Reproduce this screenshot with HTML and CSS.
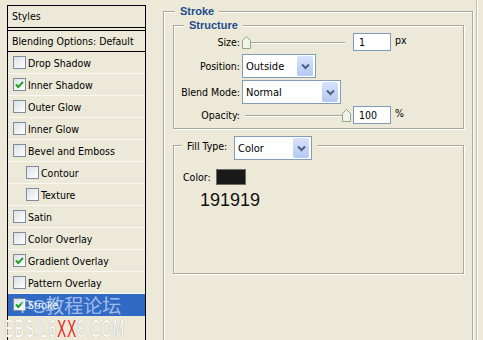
FILE: index.html
```html
<!DOCTYPE html>
<html lang="en">

<head>
  <meta charset="UTF-8" />
  <meta name="viewport" content="width=device-width, initial-scale=1.0" />
  <title>Layer Style - Stroke</title>
  <link rel="stylesheet" href="styles.css">
</head>

<body>

  <!-- Styles list on the left -->
  <div class="styles-panel">
    <div class="styles-head">Styles</div>
    <div class="blend-row">Blending Options: Default</div>
    <ul class="style-list">
      <li class="style-item"><span class="check"></span>Drop Shadow</li>
      <li class="style-item"><span class="check"><svg viewBox="0 0 11 11"><path d="M2 5.5 L4.3 8 L9 2.8" /></svg></span>Inner Shadow</li>
      <li class="style-item"><span class="check"></span>Outer Glow</li>
      <li class="style-item"><span class="check"></span>Inner Glow</li>
      <li class="style-item"><span class="check"></span>Bevel and Emboss</li>
      <li class="style-item sub"><span class="check"></span>Contour</li>
      <li class="style-item sub"><span class="check"></span>Texture</li>
      <li class="style-item"><span class="check"></span>Satin</li>
      <li class="style-item"><span class="check"></span>Color Overlay</li>
      <li class="style-item"><span class="check"><svg viewBox="0 0 11 11"><path d="M2 5.5 L4.3 8 L9 2.8" /></svg></span>Gradient Overlay</li>
      <li class="style-item"><span class="check"></span>Pattern Overlay</li>
      <li class="style-item selected"><span class="check"><svg viewBox="0 0 11 11"><path d="M2 5.5 L4.3 8 L9 2.8" /></svg></span>Stroke</li>
      <li class="style-item empty"></li>
    </ul>
  </div>

  <!-- Stroke settings -->
  <div class="settings">
    <div class="group stroke-group">
      <div class="group-title">Stroke</div>

      <div class="group structure-group">
        <div class="group-title">Structure</div>

        <div class="row row-size">
          <span class="label">Size:</span>
          <div class="slider">
            <span class="track"></span>
            <svg class="thumb" style="left: 0px" viewBox="0 0 9 13"><path d="M0.5 4.5 L4.5 0.5 L8.5 4.5 L8.5 12.5 L0.5 12.5 Z" /></svg>
          </div>
          <span class="num">1</span>
          <span class="unit">px</span>
        </div>

        <div class="row row-pos">
          <span class="label">Position:</span>
          <div class="select select-pos">
            <span class="value">Outside</span>
            <span class="select-btn"><svg viewBox="0 0 9 7"><path d="M1 1.5 L4.5 5 L8 1.5" /></svg></span>
          </div>
        </div>

        <div class="row row-blend">
          <span class="label">Blend Mode:</span>
          <div class="select select-blend">
            <span class="value">Normal</span>
            <span class="select-btn"><svg viewBox="0 0 9 7"><path d="M1 1.5 L4.5 5 L8 1.5" /></svg></span>
          </div>
        </div>

        <div class="row row-opacity">
          <span class="label">Opacity:</span>
          <div class="slider">
            <span class="track"></span>
            <svg class="thumb" style="left: 100px" viewBox="0 0 9 13"><path d="M0.5 4.5 L4.5 0.5 L8.5 4.5 L8.5 12.5 L0.5 12.5 Z" /></svg>
          </div>
          <span class="num">100</span>
          <span class="unit">%</span>
        </div>
      </div>

      <div class="group fill-group">
        <div class="group-title fill-title">
          <span class="fill-label">Fill Type:</span>
          <div class="select select-fill">
            <span class="value">Color</span>
            <span class="select-btn"><svg viewBox="0 0 9 7"><path d="M1 1.5 L4.5 5 L8 1.5" /></svg></span>
          </div>
        </div>

        <div class="color-row">
          <span>Color:</span>
          <span class="swatch"></span>
        </div>
        <div class="hex">191919</div>
      </div>
    </div>
    <div class="edge"></div>
  </div>

  <!-- forum watermark -->
  <div class="watermark">
    <div class="wm-top">PS教程论坛</div>
    <div class="wm-bottom">BBS.16<span class="red">XX</span>8.COM</div>
  </div>

</body>

</html>
```

FILE: styles.css
```css
:root {
  --bg: #ECE9D8;
  --etch: #ACA899;
  --field: #7F9DB9;
  --title: #1F4C8F;
  --select-blue: #316AC5;
}

* {
  margin: 0;
  padding: 0;
  box-sizing: border-box;
}

body {
  background-color: var(--bg);
  font-family: 'DejaVu Sans Condensed', 'Liberation Sans', sans-serif;
  font-size: 10.5px;
  color: #000;
  display: flex;
  height: 340px;
  overflow: hidden;
  position: relative;
}

/* Left styles list */
.styles-panel {
  margin: 5px 0 0 7px;
  width: 139px;
  border: 1px solid #000;
  border-bottom: none;
  flex-shrink: 0;
}

.styles-head {
  height: 22px;
  line-height: 21px;
  padding-left: 4px;
  border-bottom: 1px solid #000;
}

.blend-row {
  margin-top: 2px;
  border-top: 1px solid #000;
  height: 22px;
  line-height: 20px;
  padding-left: 4px;
  border-bottom: 1px solid #000;
  white-space: nowrap;
}

.style-list {
  list-style: none;
}

.style-item {
  display: flex;
  align-items: center;
  gap: 2px;
  height: 22px;
  padding-left: 5px;
  border-bottom: 1px solid #F8F7F0;
}

.style-item.sub {
  padding-left: 18px;
}

.style-item.selected {
  background-color: var(--select-blue);
  color: #fff;
  border-bottom-color: var(--select-blue);
}

.style-item.empty {
  border-bottom: none;
}

.check {
  width: 13px;
  height: 13px;
  border: 1px solid #7B8C9E;
  background: linear-gradient(135deg, #DCE1E6, #FFFFFF);
  display: flex;
  align-items: center;
  justify-content: center;
  flex-shrink: 0;
}

.check svg {
  width: 11px;
  height: 11px;
}

.check path {
  fill: none;
  stroke: #21A121;
  stroke-width: 2;
}

/* Right settings area */
.settings {
  display: flex;
  margin-left: 17px;
}

.group {
  position: relative;
  border: 1px solid var(--etch);
  box-shadow: 1px 1px 0 #fff, inset 1px 1px 0 #fff;
}

.group-title {
  position: absolute;
  top: -7px;
  left: 10px;
  padding: 0 5px;
  background-color: var(--bg);
  font-family: 'Liberation Sans', sans-serif;
  font-size: 11px;
  font-weight: bold;
  color: var(--title);
  line-height: 13px;
}

.stroke-group {
  width: 310px;
  height: 340px;
  margin-top: 11px;
  padding: 13px 8px 0 9px;
}

.stroke-group > .group-title {
  left: 11px;
}

.structure-group {
  height: 104px;
}

.row {
  display: flex;
  align-items: center;
}

.row-size {
  height: 18px;
  margin-top: 7px;
}

.row-pos {
  height: 24px;
  margin-top: 3px;
}

.row-blend {
  height: 24px;
  margin-top: 2px;
}

.row-opacity {
  height: 18px;
  margin-top: 2px;
}

.label {
  width: 66px;
  text-align: right;
  margin-right: 2px;
  white-space: nowrap;
}

.slider {
  position: relative;
  width: 110px;
  height: 13px;
  margin-right: 1px;
}

.track {
  position: absolute;
  left: 3px;
  right: 7px;
  top: 6px;
  height: 2px;
  border-top: 1px solid #A8A695;
  border-bottom: 1px solid #fff;
}

.thumb {
  position: absolute;
  top: 0;
  width: 9px;
  height: 13px;
}

.thumb path {
  fill: #EEF5E8;
  stroke: #8FA88A;
  stroke-width: 1;
}

.num {
  width: 38px;
  height: 18px;
  line-height: 16px;
  padding-left: 5px;
  background-color: #fff;
  border: 1px solid var(--field);
}

.unit {
  margin-left: 4px;
  align-self: flex-start;
  margin-top: 1px;
}

.select {
  display: flex;
  align-items: center;
  justify-content: space-between;
  height: 24px;
  background-color: #fff;
  border: 1px solid var(--field);
  font-family: 'DejaVu Sans Condensed', 'Liberation Sans', sans-serif;
  font-size: 11px;
  font-weight: normal;
  color: #000;
}

.select .value {
  padding-left: 3px;
}

.select-btn {
  width: 16px;
  height: 20px;
  margin-right: 2px;
  border-radius: 2px;
  background: linear-gradient(#D8E3FC, #B4C8F4);
  display: flex;
  align-items: center;
  justify-content: center;
}

.select-btn svg {
  width: 9px;
  height: 7px;
}

.select-btn path {
  fill: none;
  stroke: #4D6185;
  stroke-width: 2;
}

.select-pos {
  width: 74px;
}

.select-blend {
  width: 99px;
}

.select-fill {
  width: 78px;
}

.fill-group {
  height: 129px;
  margin-top: 16px;
  padding: 23px 0 0 9px;
}

.fill-title {
  top: -10px;
  left: 8px;
  display: flex;
  align-items: center;
  font-family: 'DejaVu Sans Condensed', 'Liberation Sans', sans-serif;
  font-size: 10.5px;
  font-weight: normal;
  color: #000;
}

.fill-label {
  width: 47px;
  margin-top: -4px;
  white-space: nowrap;
}

.color-row {
  display: flex;
  align-items: center;
  gap: 5px;
}

.swatch {
  width: 30px;
  height: 16px;
  background-color: #191919;
  border: 1px solid #6E6C62;
}

.hex {
  margin: 5px 0 0 17px;
  font-family: 'Liberation Sans', sans-serif;
  font-size: 18px;
  line-height: 20px;
  color: #111;
}

.edge {
  margin-left: 3px;
  width: 2px;
  border-left: 1px solid #C2BFAE;
  border-right: 1px solid #fff;
}

/* watermark laid over the list */
.watermark {
  position: absolute;
  left: 5px;
  top: 296px;
  pointer-events: none;
}

.wm-top {
  margin-left: 15px;
  font-family: 'Liberation Sans', 'Noto Sans CJK SC', sans-serif;
  font-size: 19px;
  line-height: 22px;
  color: rgba(225, 235, 255, 0.65);
}

.wm-bottom {
  font-family: 'Liberation Sans', sans-serif;
  font-size: 23px;
  line-height: 22px;
  letter-spacing: 2px;
  color: #fff;
  text-shadow: 0 0 1px #8F8C7E;
  transform: scaleX(0.58);
  transform-origin: left;
  white-space: nowrap;
}

.wm-bottom .red {
  color: #E5251B;
  text-shadow: none;
}
```
